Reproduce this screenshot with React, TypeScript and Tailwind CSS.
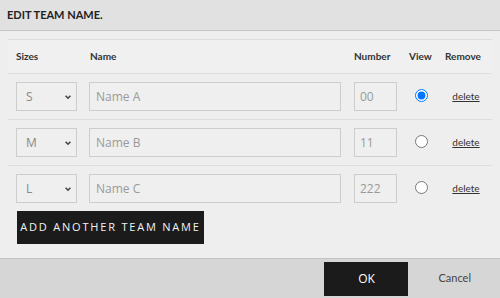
const rows = [
  { size: "S", name: "Name A", number: "00", view: true },
  { size: "M", name: "Name B", number: "11", view: false },
  { size: "L", name: "Name C", number: "222", view: false },
];

const Chevron = () => (
  <svg className="h-[8px] w-[8px] text-[#444]" viewBox="0 0 10 10" fill="none" stroke="currentColor" strokeWidth={2}>
    <path d="M2 3.5l3 3 3-3" />
  </svg>
);

const App = () => {
  return (
    <div className="w-[500px] h-[298px] flex flex-col font-['Lato','Liberation_Sans',sans-serif] text-[#333]">
      <div className="h-[31px] shrink-0 flex items-center px-[7px] bg-[#e1e1e1] border-b border-[#c6c6c6]">
        <span className="text-[11px] font-bold uppercase text-[#222]">Edit team name.</span>
      </div>

      <div className="flex-1 bg-[#eeeeee] px-[8px] pt-[8px]">
        <div className="w-[484px]">
          <div className="grid grid-cols-[73px_265px_55px_36px_55px] h-[35px] items-center border-y border-[#dedede] bg-[#f0f0f0] text-[10px] font-bold">
            <div className="pl-[8px]">Sizes</div>
            <div className="pl-[9px]">Name</div>
            <div className="pl-[8px]">Number</div>
            <div className="pl-[8px]">View</div>
            <div className="pl-[8px]">Remove</div>
          </div>

          {rows.map((row, i) => (
            <div
              key={row.size}
              className={
                "grid grid-cols-[73px_265px_55px_36px_55px] items-center py-[8px] " +
                (i < rows.length - 1 ? "border-b border-[#dedede]" : "")
              }
            >
              <div className="pl-[8px]">
                <div className="w-[61px] h-[29px] flex items-center justify-between pl-[9px] pr-[4px] border border-[#cdcdcd] bg-[#efefef] text-[12px] text-[#888] font-['Open_Sans',sans-serif]">
                  <span>{row.size}</span>
                  <Chevron />
                </div>
              </div>
              <div className="pl-[8px]">
                <div className="w-[252px] h-[29px] flex items-center px-[6px] border border-[#cdcdcd] bg-[#efefef] text-[12px] text-[#9a9a9a] font-['Open_Sans',sans-serif]">
                  {row.name}
                </div>
              </div>
              <div className="pl-[8px]">
                <div className="w-[43px] h-[29px] flex items-center px-[5px] border border-[#cdcdcd] bg-[#efefef] text-[12px] text-[#9a9a9a] font-['Open_Sans',sans-serif]">
                  {row.number}
                </div>
              </div>
              <div className="flex justify-center pl-[4px] -mt-[3px]">
                <input type="radio" name="view" defaultChecked={row.view} className="m-0 h-[13px] w-[13px]" />
              </div>
              <div className="flex justify-center pl-[3px]">
                <a href="#" className="text-[10px] underline text-[#333]">delete</a>
              </div>
            </div>
          ))}

          <div className="pl-[9px]">
            <button className="h-[33px] w-[187px] bg-[#1b1b1b] text-[#f2f2f2] text-[11px] font-normal uppercase tracking-[1.8px] font-['Open_Sans',sans-serif]">
              Add another team name
            </button>
          </div>
        </div>
      </div>

      <div className="h-[40px] shrink-0 flex items-center justify-end bg-[#d6d6d6] border-t border-[#c4c4c4] pr-[29px]">
        <button className="h-[34px] w-[84px] bg-[#1b1b1b] text-white text-[12px] font-medium font-['Open_Sans',sans-serif]">
          OK
        </button>
        <span className="ml-[30px] text-[11px] text-[#444]">Cancel</span>
      </div>
    </div>
  );
};

export default App;
